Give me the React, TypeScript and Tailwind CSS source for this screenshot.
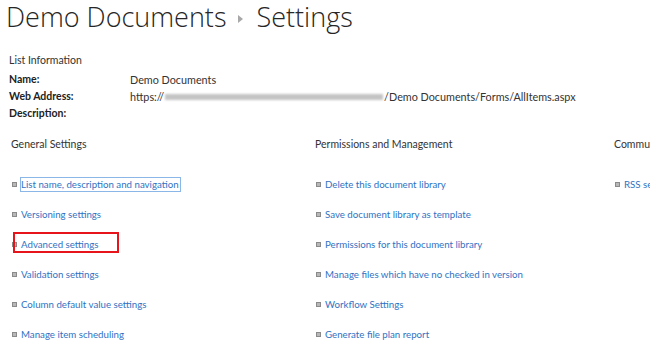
const general = [
  "List name, description and navigation",
  "Versioning settings",
  "Advanced settings",
  "Validation settings",
  "Column default value settings",
  "Manage item scheduling",
];

const permissions = [
  "Delete this document library",
  "Save document library as template",
  "Permissions for this document library",
  "Manage files which have no checked in version",
  "Workflow Settings",
  "Generate file plan report",
];

const comms = ["RSS settings"];

const Bullet = () => (
  <span className="inline-block w-[5px] h-[5px] bg-[#b8b8b8] border border-[#8a8a8a] shrink-0" />
);

function LinkItem({ label }: { label: string }) {
  const focused = label === "List name, description and navigation";
  const boxed = label === "Advanced settings";
  return (
    <li className="relative h-[30px] flex items-center">
      <div className="flex items-center gap-[4px]">
        <Bullet />
        <a
          className={
            "text-[#2f72c4] whitespace-nowrap leading-[13px] " +
            (focused ? "outline outline-1 outline-[#8bb6e8] pr-[1px]" : "")
          }
        >
          {label}
        </a>
      </div>
      {boxed && (
        <span className="absolute left-[1px] top-[3px] w-[106px] h-[21px] border-2 border-[#e8141b]" />
      )}
    </li>
  );
}

function Column({ title, items, className }: { title: string; items: string[]; className: string }) {
  return (
    <div className={"shrink-0 " + className}>
      <h3 className="text-[10.5px] text-[#333] h-[20px] leading-[20px]">{title}</h3>
      <ul className="mt-[15px] pl-[1px]">
        {items.map((i) => (
          <LinkItem key={i} label={i} />
        ))}
      </ul>
    </div>
  );
}

export default function App() {
  return (
    <div
      className="w-[650px] h-[349px] overflow-hidden bg-white text-[#444] text-[9.7px]"
      style={{ fontFamily: 'Lato, "Open Sans", sans-serif' }}
    >
      <header
        className="flex items-center h-[34px] pl-[6px] text-[#262626] font-light text-[27px] leading-[34px]"
        style={{ fontFamily: '"Open Sans", "Noto Sans", sans-serif' }}
      >
        <span>Demo Documents</span>
        <span className="ml-[12px] mr-[13px] mt-[3px] inline-block w-0 h-0 border-y-[4px] border-y-transparent border-l-[5px] border-l-[#a8a8a8]" />
        <span>Settings</span>
      </header>

      <section className="pl-[9px] mt-[18px] text-[#333]">
        <div className="h-[17px] leading-[17px] text-[10.5px]">List Information</div>
        <div className="mt-[2px] grid grid-cols-[121px_1fr] leading-[17px] text-[10.5px]">
          <span className="font-bold text-[#222]">Name:</span>
          <span className="text-[10.8px]">Demo Documents</span>
          <span className="font-bold text-[#222]">Web Address:</span>
          <span className="flex items-center whitespace-nowrap text-[10.8px]">
            https://
            <span className="inline-block w-[218px] h-[6px] bg-[#c4c4c4] blur-[1px] mx-[1px]" />
            /Demo Documents/Forms/AllItems.aspx
          </span>
          <span className="font-bold text-[#222]">Description:</span>
          <span />
        </div>
      </section>

      <div className="flex mt-[12px] pl-[11px]">
        <Column title="General Settings" items={general} className="w-[304px]" />
        <Column title="Permissions and Management" items={permissions} className="w-[299px]" />
        <Column title="Communications" items={comms} className="w-[200px]" />
      </div>
    </div>
  );
}
